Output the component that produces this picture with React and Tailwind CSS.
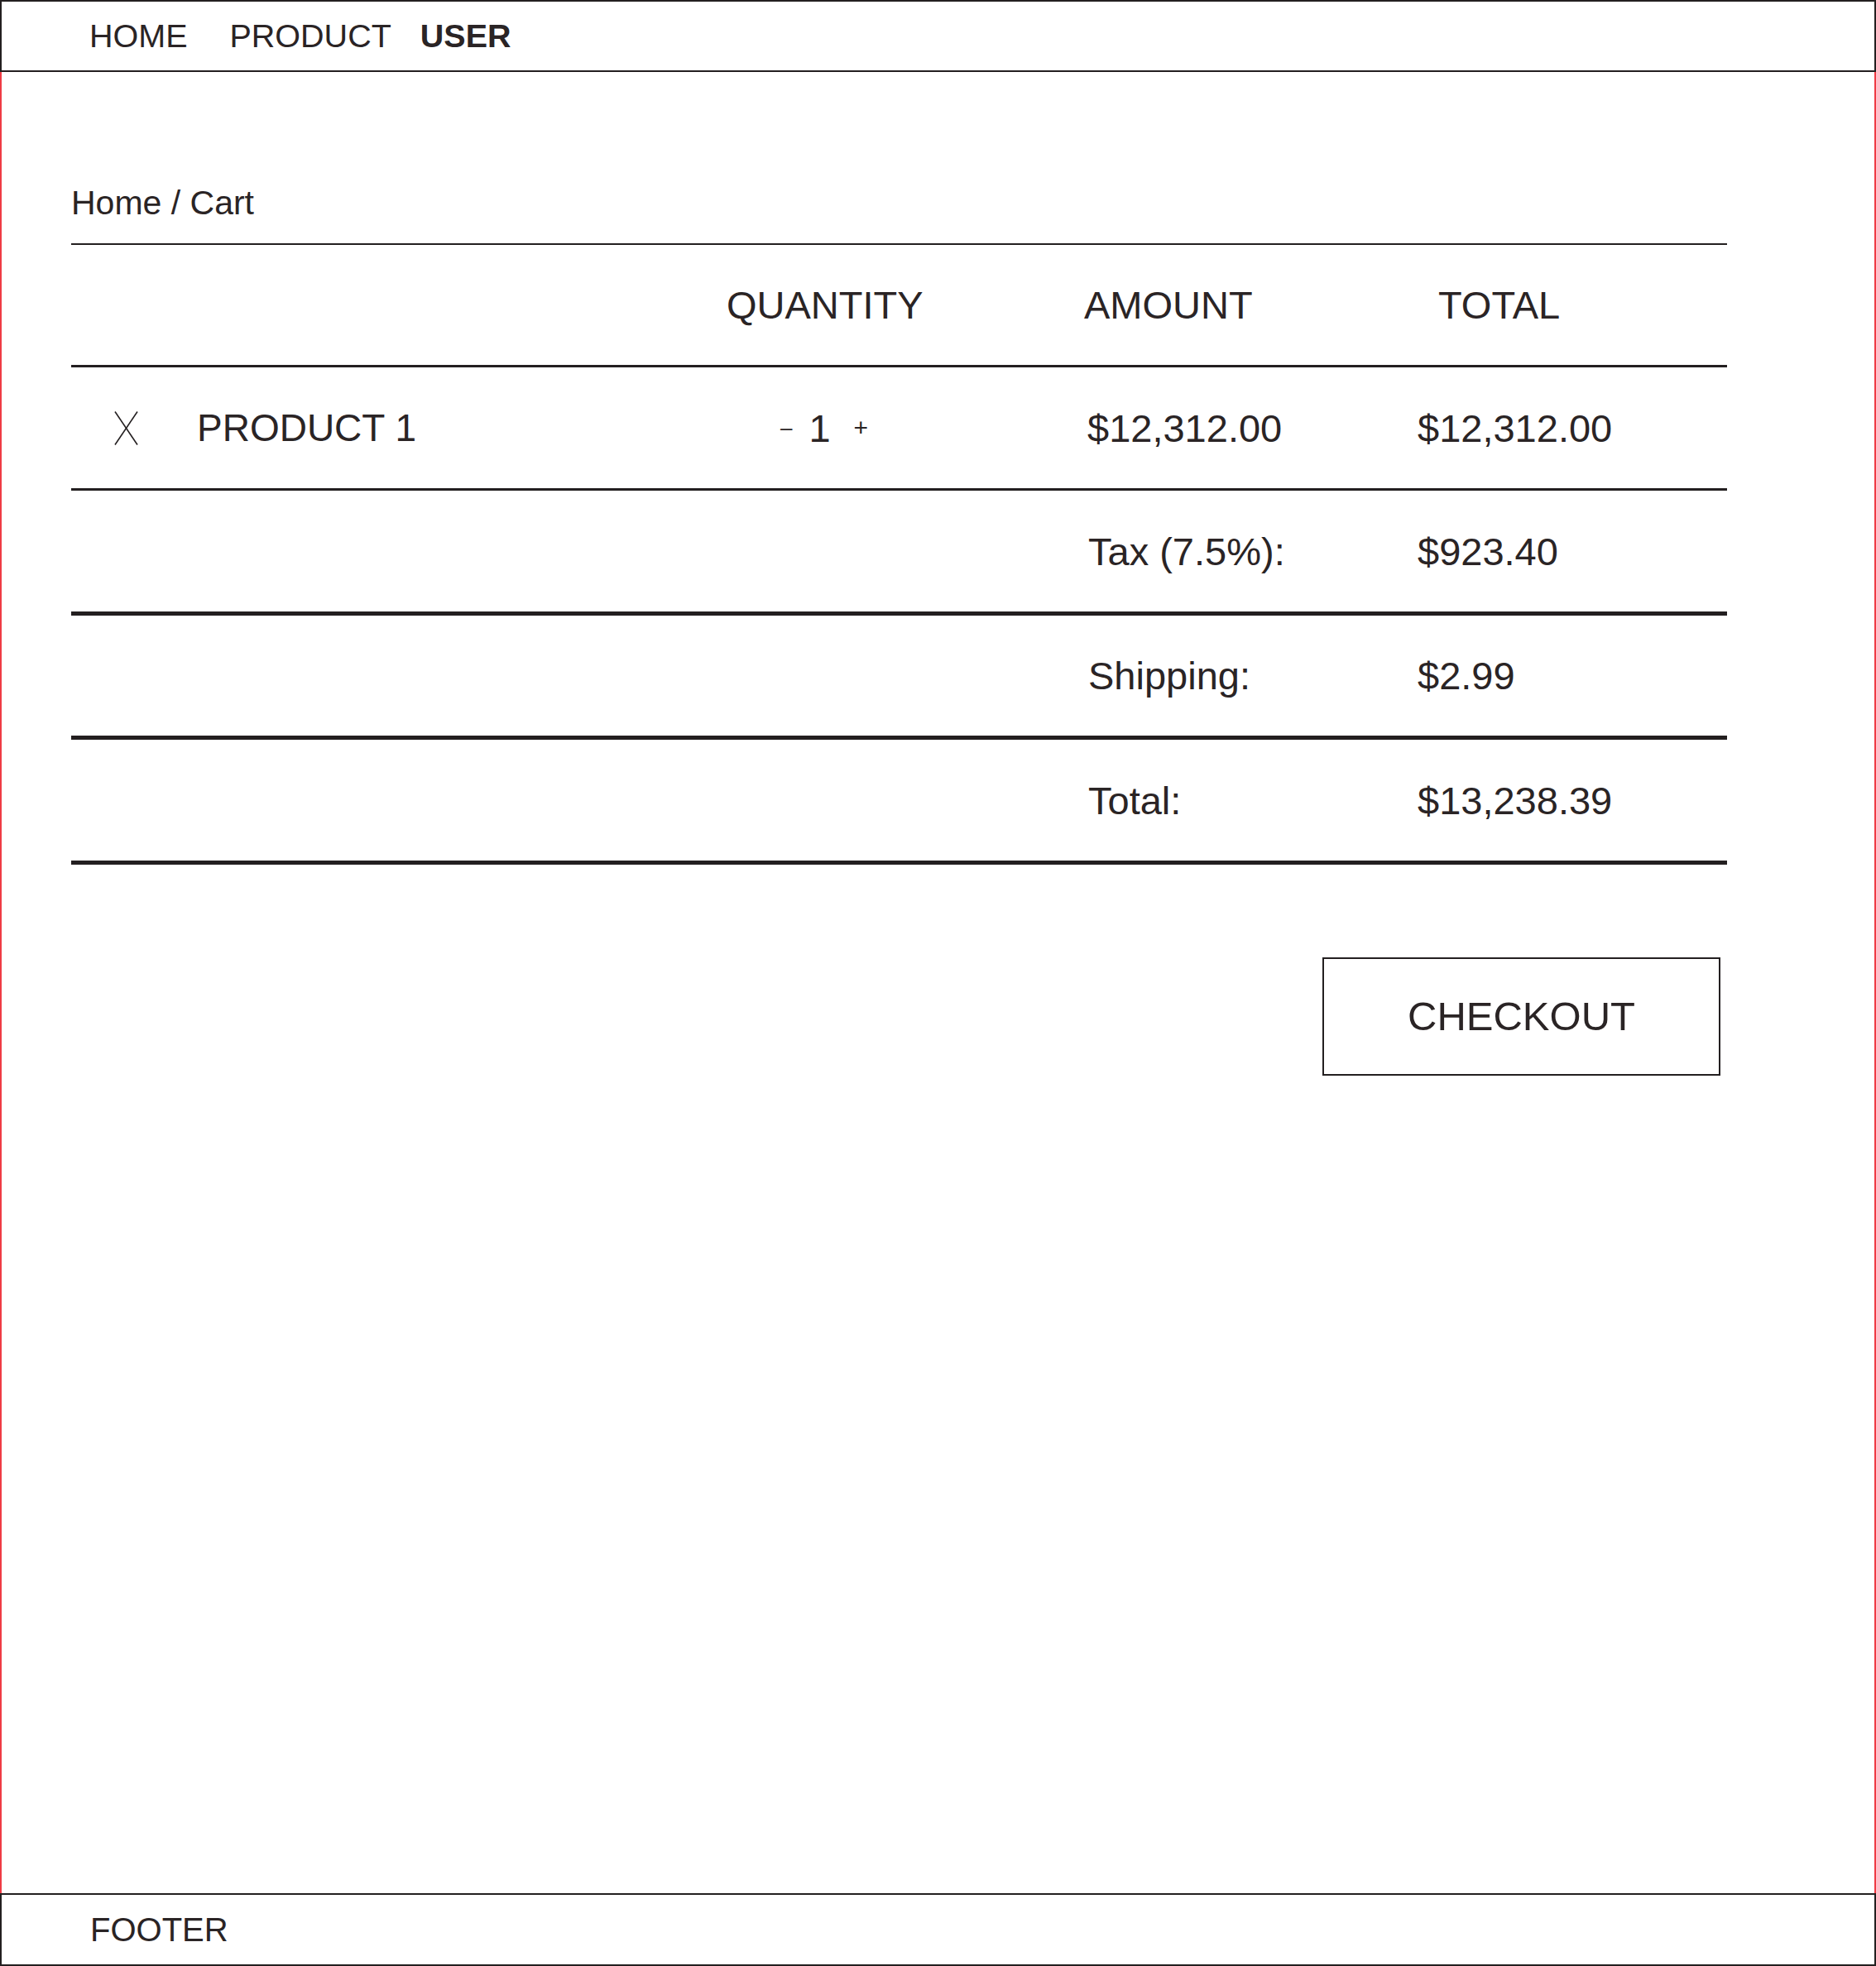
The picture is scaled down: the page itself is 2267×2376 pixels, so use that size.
import React from 'react';

const rows = [
  { label: 'Tax (7.5%):', value: '$923.40', height: 'h-[151px]' },
  { label: 'Shipping:', value: '$2.99', height: 'h-[150px]' },
  { label: 'Total:', value: '$13,238.39', height: 'h-[151px]' },
];

function CloseMark() {
  return (
    <svg width="29" height="41" viewBox="0 0 29 41" fill="none" stroke="#231f20" strokeWidth="1.6">
      <line x1="1" y1="0.5" x2="28" y2="40.5" />
      <line x1="28" y1="0.5" x2="1" y2="40.5" />
    </svg>
  );
}

export default function App() {
  return (
    <div className="flex min-h-screen flex-col bg-white font-['Liberation_Sans',Arial,sans-serif] text-[#2a2425]">
      <header className="flex h-[87px] items-center border-2 border-[#231f20] pl-[106px] text-[39.5px] leading-none">
        <a className="mr-[51px]">HOME</a>
        <a className="mr-[35px]">PRODUCT</a>
        <a className="font-bold">USER</a>
      </header>

      <main className="flex-1 border-x-2 border-[#ef3b44] pl-[84px] pt-[138px]">
        <div className="w-[2001px]">
          <div className="border-b-2 border-[#231f20] pb-[28px] text-[41px] leading-none">Home / Cart</div>

          <div className="grid h-[148px] grid-cols-[790px_434px_403px_1fr] items-center border-b-[3px] border-[#231f20] text-[47px] leading-none">
            <div />
            <div className="pl-[2px]">QUANTITY</div>
            <div>AMOUNT</div>
            <div className="pl-[25px]">TOTAL</div>
          </div>

          <div className="grid h-[149px] grid-cols-[790px_434px_403px_1fr] items-center border-b-[3px] border-[#231f20] text-[47px] leading-none">
            <div className="flex items-center pl-[52px]">
              <button type="button" className="flex">
                <CloseMark />
              </button>
              <span className="ml-[71px] text-[46px]">PRODUCT 1</span>
            </div>
            <div className="flex w-[240px] items-center justify-center">
              <button type="button" className="text-[26px] leading-none">–</button>
              <span className="ml-[20px]">1</span>
              <button type="button" className="ml-[28px] text-[30px] leading-none">+</button>
            </div>
            <div className="pl-[4px]">$12,312.00</div>
            <div>$12,312.00</div>
          </div>

          {rows.map((row) => (
            <div
              key={row.label}
              className={`grid ${row.height} grid-cols-[790px_434px_403px_1fr] items-center border-b-[5px] border-[#231f20] text-[47px] leading-none`}
            >
              <div />
              <div />
              <div className="pl-[5px]">{row.label}</div>
              <div>{row.value}</div>
            </div>
          ))}

          <div className="flex justify-end pr-[8px] pt-[112px]">
            <button
              type="button"
              className="flex h-[143px] w-[481px] items-center justify-center border-2 border-[#231f20] text-[49px] leading-none"
            >
              CHECKOUT
            </button>
          </div>
        </div>
      </main>

      <footer className="flex h-[88px] items-center border-2 border-[#231f20] pl-[107px] text-[40px] leading-none">
        FOOTER
      </footer>
    </div>
  );
}
